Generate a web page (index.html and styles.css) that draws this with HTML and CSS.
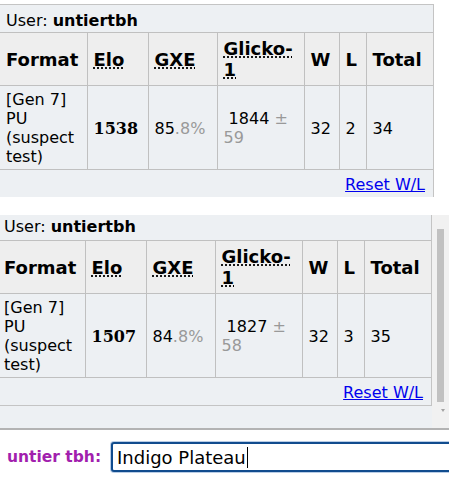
FILE: index.html
```html
<!DOCTYPE html>
<html>
<head>
<meta charset="utf-8">
<link rel="stylesheet" href="styles.css">
</head>
<body>
<div class="panel panel-top">
  <div class="user">User: <strong>untiertbh</strong></div>
  <table class="ladder">
    <colgroup>
      <col class="c-format"><col class="c-elo"><col class="c-gxe"><col class="c-glicko"><col class="c-w"><col class="c-l"><col class="c-total">
    </colgroup>
    <tr><th>Format</th><th><abbr>Elo</abbr></th><th><abbr>GXE</abbr></th><th><abbr>Glicko-1</abbr></th><th>W</th><th>L</th><th>Total</th></tr>
    <tr><td>[Gen 7] PU (suspect test)</td><td><strong class="elo">1538</strong></td><td>85<span class="dim">.8%</span></td><td>&nbsp;1844<span class="dim"> ± 59</span></td><td>32</td><td>2</td><td>34</td></tr>
  </table>
  <div class="reset"><a href="#">Reset W/L</a></div>
</div>

<div class="scroller">
  <div class="panel panel-bottom">
    <div class="user">User: <strong>untiertbh</strong></div>
    <table class="ladder">
      <colgroup>
        <col class="c-format"><col class="c-elo"><col class="c-gxe"><col class="c-glicko"><col class="c-w"><col class="c-l"><col class="c-total">
      </colgroup>
      <tr><th>Format</th><th><abbr>Elo</abbr></th><th><abbr>GXE</abbr></th><th><abbr>Glicko-1</abbr></th><th>W</th><th>L</th><th>Total</th></tr>
      <tr><td>[Gen 7] PU (suspect test)</td><td><strong class="elo">1507</strong></td><td>84<span class="dim">.8%</span></td><td>&nbsp;1827<span class="dim"> ± 58</span></td><td>32</td><td>3</td><td>35</td></tr>
    </table>
    <div class="reset"><a href="#">Reset W/L</a></div>
  </div>
  <div class="scrollbar">
    <div class="thumb"></div>
    <div class="arrow"></div>
  </div>
</div>

<div class="chatbar">
  <label class="name">untier tbh:</label>
  <div class="textbox"><span class="typed">Indigo Plateau</span><span class="caret"></span></div>
</div>
</body>
</html>
```

FILE: styles.css
```css
html, body {
  margin: 0;
  padding: 0;
  background: #ffffff;
  overflow: hidden;
}

body {
  font-family: "DejaVu Sans", Verdana, sans-serif;
  font-size: 16px;
  color: #000;
  width: 449px;
  height: 481px;
}

.panel {
  box-sizing: border-box;
  width: 434px;
  background: #edf0f3;
  border-right: 1px solid #c4c4c4;
  flex: none;
}

.panel-top {
  margin-top: 4px;
  border-top: 1px solid #c4c4c4;
}

.panel-bottom {
  margin-left: -2px;
  border-bottom: 1px solid #c4c4c4;
  align-self: flex-start;
}

.user {
  line-height: 19px;
  padding: 6px 6px 2px;
}

.panel-bottom .user {
  padding: 2px 6px 4px;
}

.ladder {
  width: 100%;
  table-layout: fixed;
  border-collapse: collapse;
  border-left: hidden;
  border-right: hidden;
}

.c-format { width: 87px; }
.c-elo { width: 61px; }
.c-gxe { width: 69px; }
.c-glicko { width: 87px; }
.c-w { width: 35px; }
.c-l { width: 27px; }
.c-total { width: 67px; }

.ladder th,
.ladder td {
  border: 1px solid #c0c0c0;
  text-align: left;
  vertical-align: middle;
}

.ladder th {
  background: #eeeeee;
  font-size: 18px;
  font-weight: bold;
  line-height: 21px;
  padding: 5px 6px;
}

.ladder td {
  line-height: 19px;
  padding: 4px 6px 3px;
}

abbr {
  text-decoration: underline dotted;
  text-underline-offset: 2px;
}

.elo {
  font-family: "DejaVu Serif", "Liberation Serif", serif;
  font-weight: bold;
}

.dim {
  color: #999999;
}

.reset {
  text-align: right;
  line-height: 19px;
  padding: 5px 8px 3px;
}

.reset a {
  color: #0000ee;
  text-decoration: underline;
}

.scroller {
  margin-top: 18px;
  height: 213px;
  display: flex;
  background: #edf0f3;
  overflow: hidden;
}

.scrollbar {
  flex: 1;
  background: #f1f1f1;
  display: flex;
  flex-direction: column;
}

.thumb {
  margin: 14px 0 0 5px;
  width: 7px;
  height: 173px;
  background: #c1c1c1;
}

.arrow {
  margin: 7px 0 0 9px;
  width: 0;
  height: 0;
  border-left: 2px solid transparent;
  border-right: 2px solid transparent;
  border-top: 3px solid #a3a3a3;
}

.chatbar {
  border-top: 2px solid #b3b3b3;
  display: flex;
  align-items: center;
  padding: 12px 0 8px 7px;
}

.name {
  flex: none;
  width: 104px;
  color: #a21fae;
  font-weight: bold;
  font-size: 15.5px;
}

.textbox {
  flex: none;
  box-sizing: border-box;
  width: 342px;
  height: 30px;
  border: 2px solid #114c8e;
  border-radius: 3px;
  box-shadow: 0 0 0 1px #b9cde6;
  background: #fff;
  padding: 0 4px;
  display: flex;
  align-items: center;
  font-size: 18px;
  color: #000;
}

.caret {
  width: 1px;
  height: 21px;
  background: #000;
  margin-left: 1px;
}
```
